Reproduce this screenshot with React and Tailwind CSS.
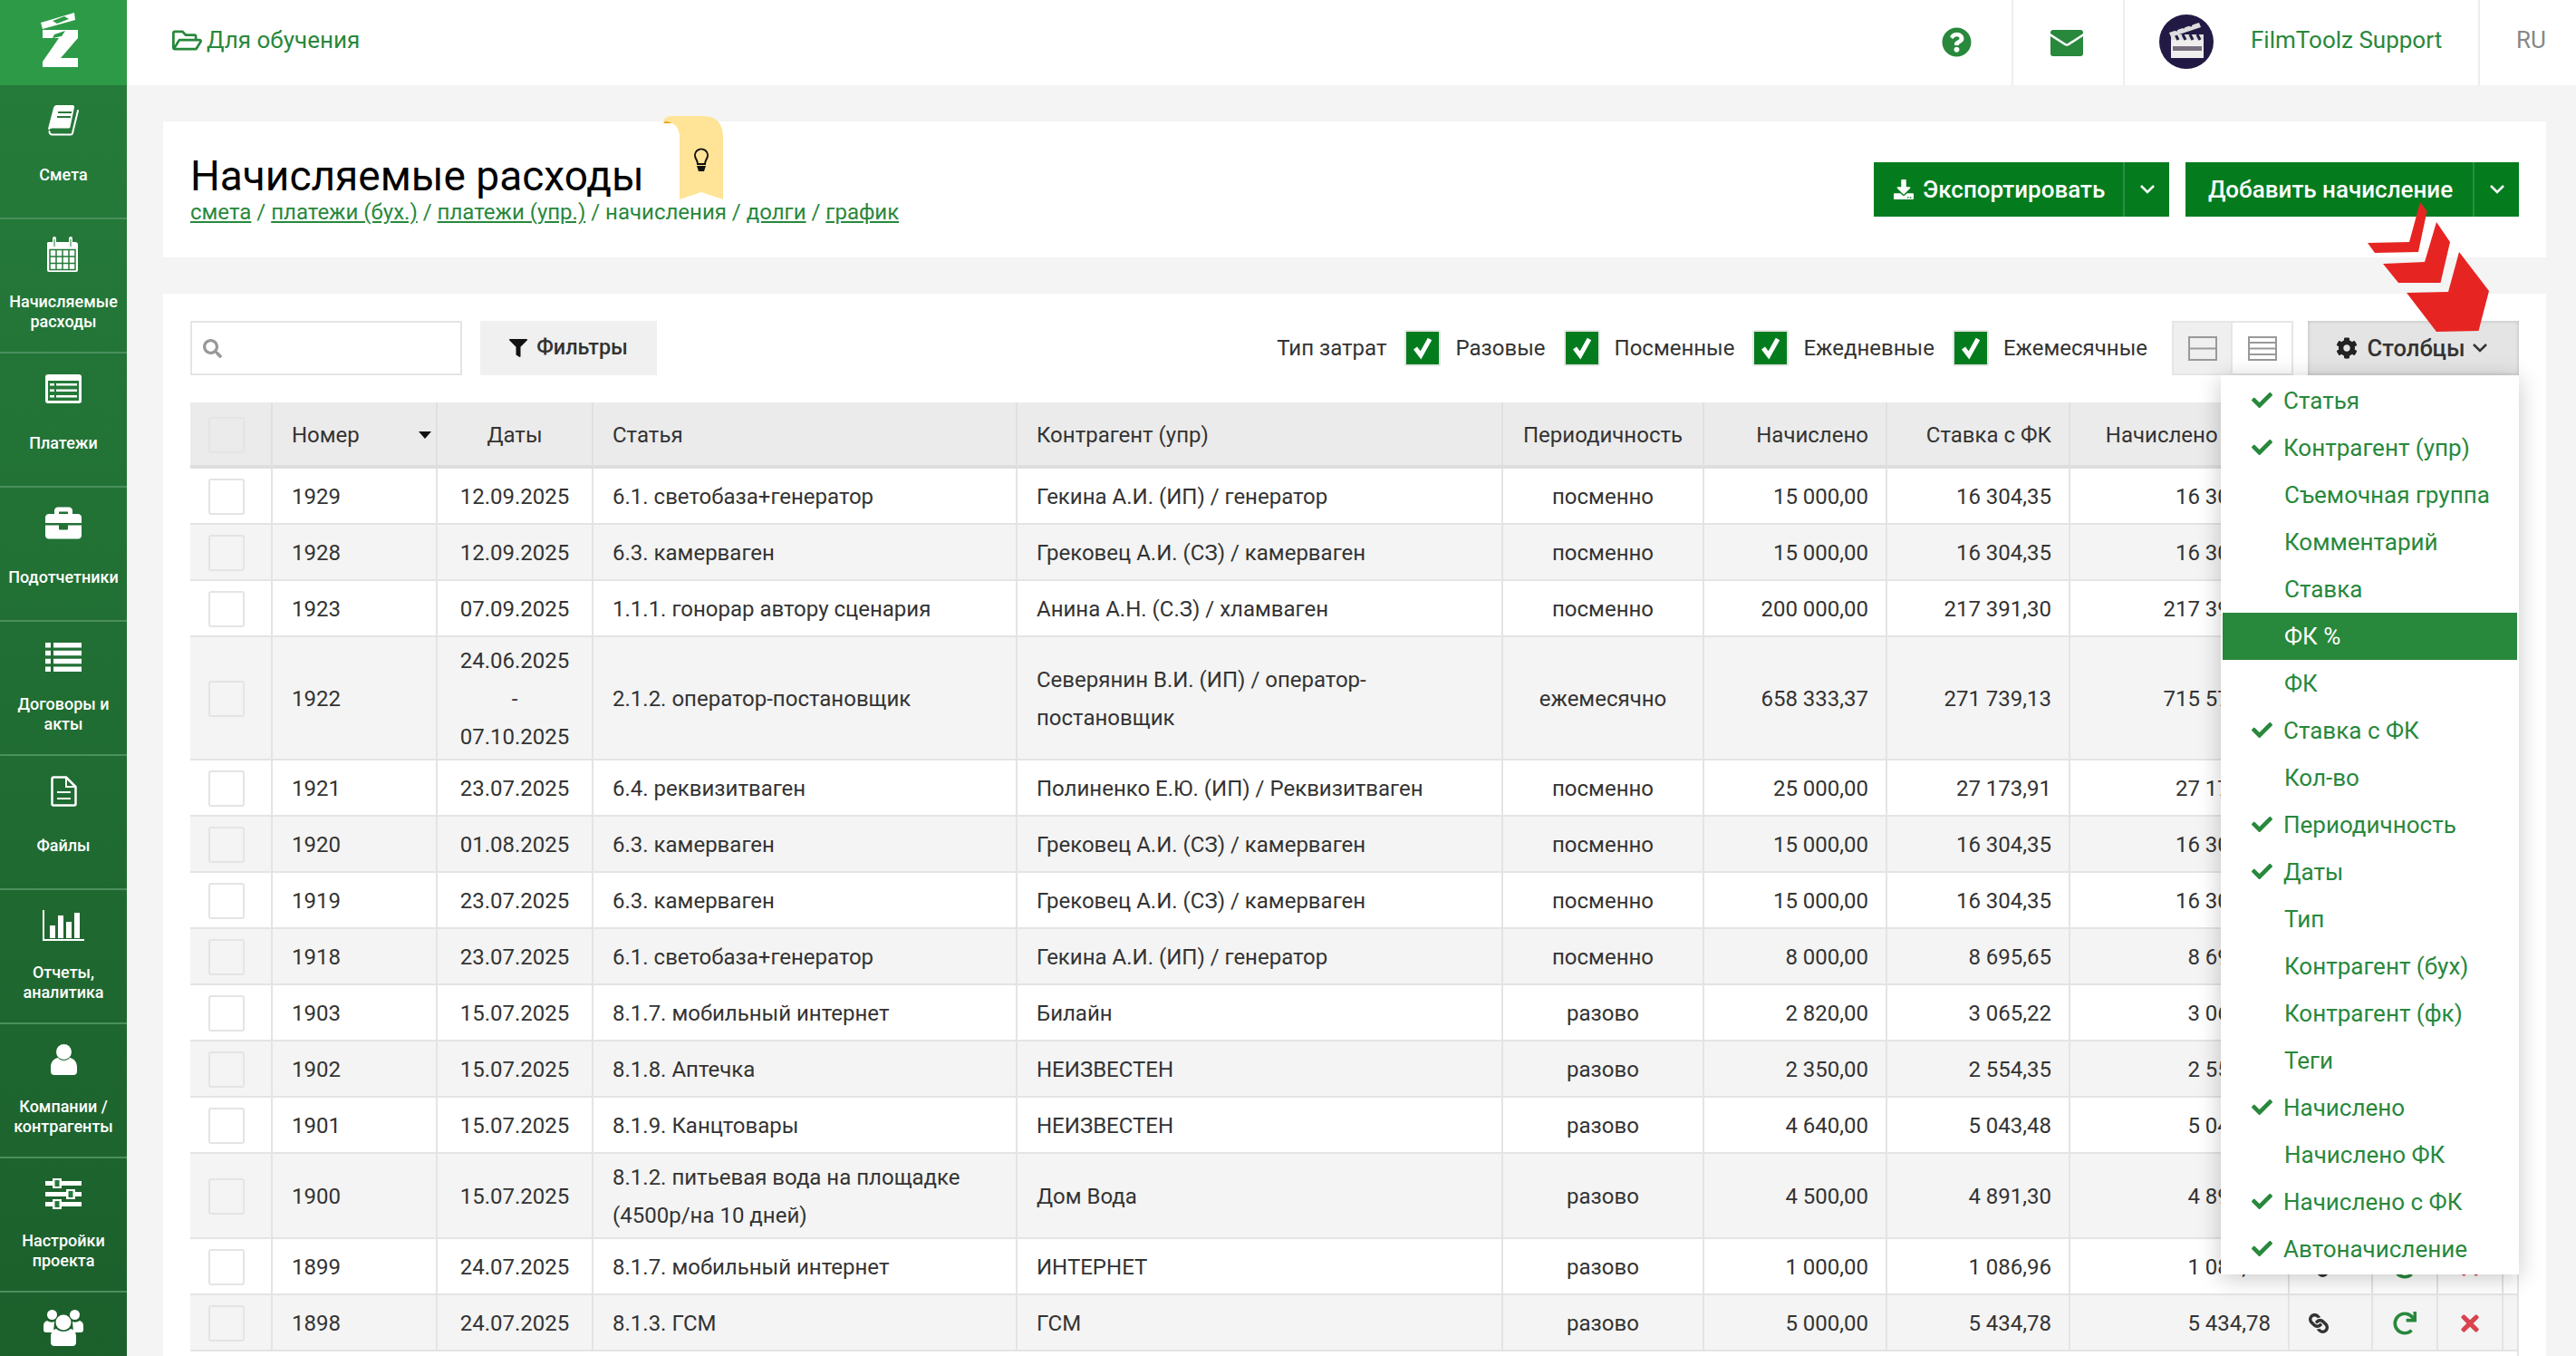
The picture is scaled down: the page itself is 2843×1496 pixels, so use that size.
import React from "react";
import { FaBriefcase, FaRegFolderOpen, FaSearch, FaFilter, FaDownload, FaCog, FaCheck, FaLink, FaRedo, FaTimes, FaQuestionCircle } from "react-icons/fa";

const G = "#247a39";

const Book = () => (
  <svg width="36" height="34" viewBox="0 0 36 34" fill="none">
    <path d="M10 0H28a2 2 0 0 1 2 2.5L25.5 24a2 2 0 0 1-2 1.5H6a4.5 4.5 0 0 0-4 2L1 26 7 3a4 4 0 0 1 3-3z" fill="#fff" />
    <path d="M2.5 29a3.2 3.2 0 0 0 3.2 3.5H26a2 2 0 0 0 2-1.5L34 6" stroke="#fff" strokeWidth="2" strokeLinecap="round" />
    <path d="M12 8H27M11 13H26" stroke={G} strokeWidth="2" />
  </svg>
);
const Calendar = () => (
  <svg width="38" height="40" viewBox="0 0 38 40" fill="none">
    <path d="M2 6h30a3 3 0 0 1 3 3v28a2 2 0 0 1-2 2H3a2 2 0 0 1-2-2V8a2 2 0 0 1 1-2z" fill="#fff" />
    <path d="M9 9V2M27 9V2" stroke="#fff" strokeWidth="4" strokeLinecap="round" />
    <path d="M9 11V3M27 11V3" stroke={G} strokeWidth="1" />
    <path d="M4 14.5h28v22H4zM4 22h28M4 29.500h28M11 14.5v22M18 14.500v22M25 14.500v22" stroke={G} strokeWidth="1.500" />
  </svg>
);
const ListAlt = () => (
  <svg width="40" height="32" viewBox="0 0 40 32">
    <rect width="40" height="32" rx="3" fill="#fff" />
    <rect x="3" y="7" width="34" height="22" fill={G} />
    <path d="M5 10h5v2.500H5zM12 10h23v2.500H12zM5 16.500h5V19H5zM12 16.500h23V19H12zM5 23h5v2.500H5zM12 23h23v2.500H12z" fill="#fff" />
  </svg>
);
const ListI = () => (
  <svg width="40" height="32" viewBox="0 0 40 32" fill="#fff">
    <path d="M0 0h6v5.500H0zM9 0h31v5.500H9zM0 8.800h6v5.500H0zM9 8.800h31v5.500H9zM0 17.700h6v5.500H0zM9 17.700h31v5.500H9zM0 26.500h6V32H0zM9 26.500h31V32H9z" />
  </svg>
);
const FileI = () => (
  <svg width="29" height="34" viewBox="0 0 29 34" fill="none" stroke="#fff" strokeWidth="2.500">
    <path d="M3 1.500H17L27.500 12V31a1.500 1.500 0 0 1-1.500 1.500H3A1.500 1.500 0 0 1 1.500 31V3A1.500 1.500 0 0 1 3 1.500z" />
    <path d="M17 1.500V12H27.500M7 18H22M7 25H22" strokeWidth="2" />
  </svg>
);
const Chart = () => (
  <svg width="46" height="34" viewBox="0 0 46 34" fill="#fff">
    <path d="M0 0h2v32h44v2H0zM8 17h6v14H8zM17 6h6v25h-6zM26 13h6v18h-6zM35 3h6v28h-6z" />
  </svg>
);
const UserI = () => (
  <svg width="29" height="34" viewBox="0 0 29 34" fill="#fff">
    <circle cx="14.500" cy="8.500" r="8.500" />
    <path d="M8 15c3 4 10 4 13 0 5 1 8 5 8 10v5a4 4 0 0 1-4 4H4a4 4 0 0 1-4-4v-5c0-5 3-9 8-10z" />
  </svg>
);
const Sliders = () => (
  <svg width="40" height="34" viewBox="0 0 40 34" fill="#fff">
    <path d="M0 3h8V0h10v3h22v5H18v3H8V8H0zM0 15h23v-3h10v3h7v5h-7v3H23v-3H0zM0 26h8v-3h10v3h22v5H18v3H8v-3H0z" />
    <path d="M10.500 2h5v7h-5zM25.500 14h5v7h-5zM10.500 25h5v7h-5z" fill={G} />
  </svg>
);
const UsersI = () => (
  <svg width="44" height="40" viewBox="0 0 44 40" fill="#fff">
    <circle cx="9.500" cy="5.500" r="5.500" />
    <circle cx="34.500" cy="5.500" r="5.500" />
    <path d="M4 12c3 2 6 2 8 1l-1 12H3a3 3 0 0 1-3-3v-4c0-3 1-5 4-6zM40 12c-3 2-6 2-8 1l1 12h8a3 3 0 0 0 3-3v-4c0-3-1-5-4-6z" />
    <circle cx="22" cy="14" r="8.500" />
    <path d="M14 21c4 4 12 4 16 0 4 1 6 4 6 9v6a4 4 0 0 1-4 4H12a4 4 0 0 1-4-4v-6c0-5 2-8 6-9z" />
  </svg>
);
const Chevron = ({ w = 16, h = 10, s = 2.5, cls = "" }) => (
  <svg className={cls} width={w} height={h} viewBox="0 0 16 10" fill="none" stroke="currentColor" strokeWidth={s}><path d="M1 1l7 7 7-7" /></svg>
);

const nav = [
  { icon: <Book />, label: ["Смета"] },
  { icon: <Calendar />, label: ["Начисляемые", "расходы"] },
  { icon: <ListAlt />, label: ["Платежи"] },
  { icon: <FaBriefcase size={40} color="#fff" />, label: ["Подотчетники"] },
  { icon: <ListI />, label: ["Договоры и", "акты"] },
  { icon: <FileI />, label: ["Файлы"] },
  { icon: <Chart />, label: ["Отчеты,", "аналитика"] },
  { icon: <UserI />, label: ["Компании /", "контрагенты"] },
  { icon: <Sliders />, label: ["Настройки", "проекта"] },
  { icon: <UsersI />, label: [] },
];

const rows = [
  ["1929", ["12.09.2025"], ["6.1. светобаза+генератор"], ["Гекина А.И. (ИП) / генератор"], "посменно", "15 000,00", "16 304,35", "16 304,35"],
  ["1928", ["12.09.2025"], ["6.3. камерваген"], ["Грековец А.И. (СЗ) / камерваген"], "посменно", "15 000,00", "16 304,35", "16 304,35"],
  ["1923", ["07.09.2025"], ["1.1.1. гонорар автору сценария"], ["Анина А.Н. (С.З) / хламваген"], "посменно", "200 000,00", "217 391,30", "217 391,30"],
  ["1922", ["24.06.2025", "-", "07.10.2025"], ["2.1.2. оператор-постановщик"], ["Северянин В.И. (ИП) / оператор-", "постановщик"], "ежемесячно", "658 333,37", "271 739,13", "715 579,75"],
  ["1921", ["23.07.2025"], ["6.4. реквизитваген"], ["Полиненко Е.Ю. (ИП) / Реквизитваген"], "посменно", "25 000,00", "27 173,91", "27 173,91"],
  ["1920", ["01.08.2025"], ["6.3. камерваген"], ["Грековец А.И. (СЗ) / камерваген"], "посменно", "15 000,00", "16 304,35", "16 304,35"],
  ["1919", ["23.07.2025"], ["6.3. камерваген"], ["Грековец А.И. (СЗ) / камерваген"], "посменно", "15 000,00", "16 304,35", "16 304,35"],
  ["1918", ["23.07.2025"], ["6.1. светобаза+генератор"], ["Гекина А.И. (ИП) / генератор"], "посменно", "8 000,00", "8 695,65", "8 695,65"],
  ["1903", ["15.07.2025"], ["8.1.7. мобильный интернет"], ["Билайн"], "разово", "2 820,00", "3 065,22", "3 065,22"],
  ["1902", ["15.07.2025"], ["8.1.8. Аптечка"], ["НЕИЗВЕСТЕН"], "разово", "2 350,00", "2 554,35", "2 554,35"],
  ["1901", ["15.07.2025"], ["8.1.9. Канцтовары"], ["НЕИЗВЕСТЕН"], "разово", "4 640,00", "5 043,48", "5 043,48"],
  ["1900", ["15.07.2025"], ["8.1.2. питьевая вода на площадке", "(4500р/на 10 дней)"], ["Дом Вода"], "разово", "4 500,00", "4 891,30", "4 891,30"],
  ["1899", ["24.07.2025"], ["8.1.7. мобильный интернет"], ["ИНТЕРНЕТ"], "разово", "1 000,00", "1 086,96", "1 086,96"],
  ["1898", ["24.07.2025"], ["8.1.3. ГСМ"], ["ГСМ"], "разово", "5 000,00", "5 434,78", "5 434,78"],
];

const menu = [
  ["Статья", 1], ["Контрагент (упр)", 1], ["Съемочная группа", 0], ["Комментарий", 0], ["Ставка", 0],
  ["ФК %", 0], ["ФК", 0], ["Ставка с ФК", 1], ["Кол-во", 0], ["Периодичность", 1], ["Даты", 1], ["Тип", 0],
  ["Контрагент (бух)", 0], ["Контрагент (фк)", 0], ["Теги", 0], ["Начислено", 1], ["Начислено ФК", 0],
  ["Начислено с ФК", 1], ["Автоначисление", 1],
];

const widths = [91, 182, 172, 468, 536, 222, 202, 202, 242, 92, 72, 72, 17];

const Box = ({ fill }) => <span className={`block w-[40px] h-[40px] rounded-[3px] border-2 border-[#e4e4e4] ${fill}`} />;

const Check = ({ label, cls }) => (
  <div className={`flex items-center ${cls}`}>
    <span className="flex items-center justify-center w-[40px] h-[40px] bg-[#047c1e] border-2 border-[#e6e6e6] text-white rounded-[2px]">
      <svg width="22" height="26" viewBox="0 0 22 26" fill="none"><path d="M3 13l6 8L19 3" stroke="#fff" strokeWidth="5" /></svg>
    </span>
    <span className="ml-[16px] text-[24px] text-[#333]">{label}</span>
  </div>
);

const thBase = "border-r-2 border-r-[#e0e0e0] border-b-4 border-b-[#dedede] bg-[#ebebeb] pt-[2px] font-normal text-[24px] h-[73px] text-[#333]";
const th = `${thBase} pl-[21px] pr-[21px]`;
const thR = `${thBase} pl-[21px] pr-[19px] text-right`;
const tdBase = "border-r-2 border-r-[#e4e4e4] border-b-2 border-b-[#e4e4e4] h-[62px] pt-[5px] pb-[3px] leading-[42px]";
const td = `${tdBase} pl-[21px] pr-[21px]`;
const tdR = `${tdBase} pl-[21px] pr-[19px] text-right`;
const tdBox = `${tdBase} pl-[20px] pr-0`;
const tdIcon = `${tdBase} pl-0 pr-0`;

export default function App() {
  return (
    <div className="w-[2843px] h-[1496px] overflow-hidden flex bg-[#f4f4f4] font-[Roboto,sans-serif] text-[#333]">
      <aside className="w-[140px] shrink-0 flex flex-col">
        <div className="h-[94px] shrink-0 bg-[#2d9a47] flex items-start justify-center">
          <svg width="90" height="94" viewBox="-5 0 90 94">
            <path d="M15 25L52 14l1 8-36 10z" fill="#fff" />
            <path d="M28 23l13-5 5 3-13 5z" fill="#2d9a47" />
            <path d="M17 33H56V42L37 64H56V74H17V68L35 42H17z" fill="#fff" />
            <path d="M30 38l12-4-4 6-10 2z" fill="#2d9a47" />
          </svg>
        </div>
        <div className="bg-linear-to-b from-[#257b3a] to-[#1b5e2b] flex-1 flex flex-col text-white">
          {nav.map((n, i) => (
            <div key={i} className="h-[148px] shrink-0 border-b-2 border-b-[#4a8f5c] flex flex-col items-center relative">
              <div className="h-[40px] mt-[19px] flex items-center justify-center">{n.icon}</div>
              <div className={`h-[48px] mt-[19px] flex flex-col justify-center items-center text-[18px] leading-[22.500px] font-medium ${n.label.length === 1 ? "pb-[5px]" : ""}`}>
                {n.label.map((l) => <span key={l}>{l}</span>)}
              </div>
            </div>
          ))}
        </div>
      </aside>

      <main className="flex-1 flex flex-col min-w-0">
        <header className="h-[94px] shrink-0 bg-white flex items-stretch">
          <div className="flex items-center ml-[50px] text-[#28883c] text-[26px] pb-[5px]">
            <FaRegFolderOpen size={33} color="#28883c" />
            <span className="ml-[5px]">Для обучения</span>
          </div>
          <div className="ml-auto flex items-stretch">
            <div className="w-[156px] flex items-center justify-end pr-[44px] pb-[2px] border-r-2 border-r-[#ededed]">
              <FaQuestionCircle size={33} color="#28883c" />
            </div>
            <div className="w-[123px] flex items-center justify-center pr-[4px] border-r-2 border-r-[#ededed]">
              <svg width="36" height="29" viewBox="0 0 36 29">
                <path d="M3 0H33a3 3 0 0 1 3 3v1L19 15q-1 .8-2 0L0 4V3a3 3 0 0 1 3-3z" fill="#28883c" />
                <path d="M0 7l15.500 10q2.500 1.600 5 0L36 7v19a3 3 0 0 1-3 3H3a3 3 0 0 1-3-3z" fill="#28883c" />
              </svg>
            </div>
            <div className="w-[392px] flex items-center pl-[38px] border-r-2 border-r-[#ededed]">
              <svg className="-mt-[2px]" width="60" height="60" viewBox="0 0 60 60">
                <circle cx="30" cy="30" r="30" fill="#221a44" />
                <rect x="13" y="28" width="36" height="20" fill="#eee" />
                <path d="M13 22h36v6H13z" fill="#ddd" />
                <path d="M18 22l3 6M26 22l3 6M34 22l3 6M42 22l3 6" stroke="#221a44" strokeWidth="3" />
                <path d="M11 20l33-11 2 5-33 11z" fill="#ddd" />
                <path d="M18 18l3-5M26 15l3-5M34 13l3-5" stroke="#221a44" strokeWidth="3" />
                <rect x="15" y="35" width="32" height="5" fill="#776f80" />
              </svg>
              <span className="ml-[41px] text-[#28883c] text-[26px] pb-[6px]">FilmToolz Support</span>
            </div>
            <div className="w-[106px] flex items-center pl-[40px] pb-[6px] text-[#888] text-[26px]">RU</div>
          </div>
        </header>

        <section className="relative mt-[40px] ml-[40px] mr-[33px] h-[150px] shrink-0 bg-white flex justify-between items-start px-[30px]">
          <div className="pt-[32px]">
            <h1 className="text-[46px] leading-[56px] text-black font-normal">Начисляемые расходы</h1>
            <div className="text-[24px] leading-[28px] text-[#28883c] -mt-[2px]">
              <span className="underline">смета</span><span> / </span>
              <span className="underline">платежи (бух.)</span><span> / </span>
              <span className="underline">платежи (упр.)</span><span> / </span>
              <span>начисления</span><span> / </span>
              <span className="underline">долги</span><span> / </span>
              <span className="underline">график</span>
            </div>
          </div>
          <svg className="absolute left-[552px] -top-[6px]" width="66" height="92" viewBox="0 0 66 92">
            <path d="M0 8Q4 2 12 2H18V8z" fill="#e0a100" />
            <path d="M8 0H44Q66 0 66 24V92L42 84 18 92V24Q18 6 0 6 2 0 8 0z" fill="#ffe497" />
            <path d="M36 47a7 7 0 1 1 12 0c-1 2-2 3-2 6h-8c0-3-1-4-2-6z" fill="none" stroke="#111" strokeWidth="2" />
            <path d="M37 55h10l-2 6h-6z" fill="#111" />
          </svg>
          <div className="flex gap-[18px] mt-[45px] text-white text-[26px] font-medium">
            <div className="flex h-[60px] bg-[#047c1e]">
              <div className="w-[277px] flex items-center pl-[22px] border-r-2 border-r-[#2b8f43]">
                <FaDownload size={22} />
                <span className="ml-[10px]">Экспортировать</span>
              </div>
              <div className="w-[49px] flex items-center justify-center"><Chevron /></div>
            </div>
            <div className="flex h-[60px] bg-[#047c1e]">
              <div className="w-[319px] flex items-center justify-center pl-[3px] border-r-2 border-r-[#2b8f43]">Добавить начисление</div>
              <div className="w-[49px] flex items-center justify-center"><Chevron /></div>
            </div>
          </div>
        </section>

        <section className="relative mt-[40px] ml-[40px] mr-[33px] flex-1 bg-white px-[30px] pt-[30px]">
          <div className="flex items-center h-[60px]">
            <div className="w-[300px] h-[60px] border-2 border-[#e4e4e4] flex items-center pl-[12px]">
              <FaSearch size={21} color="#999" />
            </div>
            <div className="ml-[20px] w-[195px] h-[60px] bg-[#f0f0f0] flex items-center justify-center text-[23.400px] font-medium">
              <FaFilter size={20} color="#111" />
              <span className="ml-[10px]">Фильтры</span>
            </div>
            <span className="ml-auto text-[24px]">Тип затрат</span>
            <Check label="Разовые" cls="ml-[20px]" />
            <Check label="Посменные" cls="ml-[20px]" />
            <Check label="Ежедневные" cls="ml-[20px]" />
            <Check label="Ежемесячные" cls="ml-[20px]" />
            <div className="ml-[27px] flex h-[60px] w-[134px] border-2 border-[#e6e6e6]">
              <div className="w-[65px] bg-[#efefef] flex items-center justify-center border-r-2 border-r-[#e6e6e6]">
                <svg width="32" height="27" viewBox="0 0 32 27" fill="none" stroke="#999" strokeWidth="2"><rect x="1" y="1" width="30" height="25" /><path d="M1 13.500h30" /></svg>
              </div>
              <div className="flex-1 flex items-center justify-center">
                <svg width="32" height="27" viewBox="0 0 32 27" fill="none" stroke="#999" strokeWidth="2"><rect x="1" y="1" width="30" height="25" /><path d="M1 7h30M1 13.500h30M1 20h30" /></svg>
              </div>
            </div>
            <div className="ml-[16px] w-[233px] h-[60px] bg-[#e4e4e4] shadow-[inset_0_0_4px_rgba(0,0,0,0.2)] flex items-center justify-center pr-[4px] text-[25.600px] font-medium">
              <FaCog size={24} color="#222" />
              <span className="ml-[10px]">Столбцы</span>
              <Chevron w={16} h={10} cls="ml-[8px]" />
            </div>
          </div>

          <table className="mt-[30px] table-fixed w-[2570px] border-separate border-spacing-0 text-[24px]">
            <colgroup>{widths.map((w, i) => <col key={i} style={{ width: w }} />)}</colgroup>
            <thead>
              <tr>
                <th className={`${thBase} pl-[20px] pr-0`}><Box fill="bg-[#ebebeb]" /></th>
                <th className={`${th} text-left relative`}>Номер
                  <span className="absolute right-[5px] top-[32px] border-x-[7px] border-x-transparent border-t-[8px] border-t-[#111]" />
                </th>
                <th className={`${th} text-center`}>Даты</th>
                <th className={`${th} text-left`}>Статья</th>
                <th className={`${th} text-left`}>Контрагент (упр)</th>
                <th className={`${th} text-center`}>Периодичность</th>
                <th className={thR}>Начислено</th>
                <th className={thR}>Ставка с ФК</th>
                <th className={thR}>Начислено с ФК</th>
                <th className={th} /><th className={th} /><th className={th} /><th className={th} />
              </tr>
            </thead>
            <tbody>
              {rows.map((r, i) => {
                const bg = i % 2 ? "bg-[#f4f4f4]" : "bg-white";
                return (
                  <tr key={r[0]} className={bg}>
                    <td className={tdBox}><Box fill={bg} /></td>
                    <td className={td}>{r[0]}</td>
                    <td className={`${td} text-center`}>{r[1].map((l, j) => <div key={j}>{l}</div>)}</td>
                    <td className={td}>{r[2].map((l, j) => <div key={j}>{l}</div>)}</td>
                    <td className={td}>{r[3].map((l, j) => <div key={j}>{l}</div>)}</td>
                    <td className={`${td} text-center`}>{r[4]}</td>
                    <td className={tdR}>{r[5]}</td>
                    <td className={tdR}>{r[6]}</td>
                    <td className={tdR}>{r[7]}</td>
                    <td className={td}><div className="flex justify-center pr-[26px]"><FaLink size={22} className="rotate-90" color="#333" /></div></td>
                    <td className={tdIcon}><div className="flex justify-center"><FaRedo size={26} color="#28883c" /></div></td>
                    <td className={tdIcon}><div className="flex justify-center"><FaTimes size={28} color="#d9434e" /></div></td>
                    <td className={tdIcon} />
                  </tr>
                );
              })}
              <tr><td className={td} colSpan={13} /></tr>
            </tbody>
          </table>

          <div className="absolute top-[90px] right-[30px] w-[329px] bg-white p-[2px] shadow-[0_4px_24px_rgba(0,0,0,0.22)] text-[#28883c] text-[26px]">
            {menu.map(([label, on]) => (
              <div key={label} className={`h-[52px] relative flex items-center ${on ? "pl-[67px]" : "pl-[68px]"} ${label === "ФК %" ? "bg-[#28883c] text-white" : ""}`}>
                {on ? <FaCheck size={23} className="absolute left-[32px] top-[14px]" /> : null}
                {label}
              </div>
            ))}
          </div>
        </section>
      </main>

      <svg className="absolute left-[2600px] top-[210px]" width="160" height="170" viewBox="2600 210 160 170" fill="#e62522">
        <path d="M2671 223L2678.500 233 2669 278 2621 279 2613 268 2659 267z" />
        <path d="M2689 245L2704 267 2693.500 312 2647 312 2630 291 2676 289z" />
        <path d="M2714 278L2747 321 2735.500 365 2689 366 2656 323 2702 322z" />
      </svg>
    </div>
  );
}
